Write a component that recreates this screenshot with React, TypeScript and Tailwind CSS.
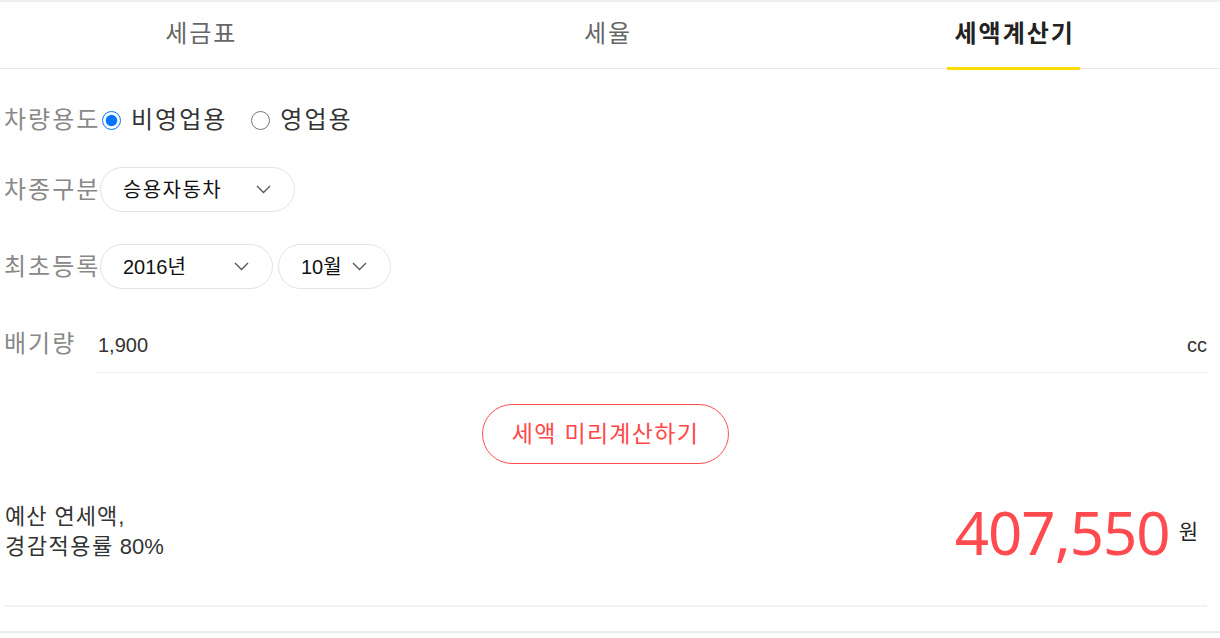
import React, { useState } from 'react';

const tabs = ['세금표', '세율', '세액계산기'];

const Chevron: React.FC = () => (
  <svg width="15" height="9" viewBox="0 0 15 9" fill="none">
    <path d="M1 1l6.5 6.5L14 1" stroke="#555" strokeWidth="1.3" />
  </svg>
);

const Pill: React.FC<{ value: string; className?: string }> = ({ value, className }) => (
  <div
    className={`flex items-center justify-between h-[45px] rounded-full border border-[#e3e3e3] bg-white pl-[22px] pr-[23px] text-[20px] text-[#111] shrink-0 whitespace-nowrap ${className ?? ''}`}
  >
    <span className="leading-none">{value}</span>
    <Chevron />
  </div>
);

const App: React.FC = () => {
  const [탭, set탭] = useState(2);
  const [용도, set용도] = useState('비영업용');

  return (
    <div
      className="w-[1220px] h-[638px] bg-white overflow-hidden"
      style={{ fontFamily: '"Liberation Sans", "Noto Sans CJK KR", sans-serif' }}
    >
      <div className="h-[2px] bg-[#eeeeee]" />

      {/* 탭 */}
      <div className="flex h-[67px] border-b border-[#e9e9e9]">
        {tabs.map((t, i) => (
          <button
            key={t}
            onClick={() => set탭(i)}
            className="flex-1 flex justify-center pr-[6px]"
          >
            <span
              className={`relative h-full flex items-center pl-[7px] pr-[5px] text-[24px] tracking-[2px] pb-[2px] whitespace-nowrap ${
                탭 === i ? 'font-bold text-[#222]' : 'text-[#666]'
              }`}
            >
              {t}
              {탭 === i && (
                <span className="absolute left-0 right-0 bottom-[-2px] h-[3px] bg-[#ffdc00]" />
              )}
            </span>
          </button>
        ))}
      </div>

      {/* 입력 폼 */}
      <div className="pl-[4px] pr-[13px]">
        <div className="flex items-center h-[40px] mt-[31px]">
          <span className="w-[96px] shrink-0 whitespace-nowrap text-[24px] tracking-[2px] text-[#888]">차량용도</span>
          {['비영업용', '영업용'].map((v, i) => (
            <label
              key={v}
              className={`flex items-center whitespace-nowrap text-[24px] tracking-[2px] text-[#333] ${i === 0 ? 'ml-[2px]' : 'ml-[24px]'}`}
            >
              <input
                type="radio"
                name="용도"
                checked={용도 === v}
                onChange={() => set용도(v)}
                className="m-0 w-[19px] h-[19px]"
              />
              <span className="ml-[10px]">{v}</span>
            </label>
          ))}
        </div>

        <div className="flex items-center mt-[27px]">
          <span className="w-[96px] shrink-0 whitespace-nowrap text-[24px] tracking-[2px] text-[#888]">차종구분</span>
          <Pill value="승용자동차" className="w-[195px] tracking-[1.4px]" />
        </div>

        <div className="flex items-center mt-[32px] gap-[5px]">
          <span className="w-[91px] shrink-0 whitespace-nowrap text-[24px] tracking-[2px] text-[#888]">최초등록</span>
          <Pill value="2016년" className="w-[173px]" />
          <Pill value="10월" className="w-[113px]" />
        </div>

        <div className="flex items-center mt-[28px] h-[56px]">
          <span className="w-[93px] shrink-0 whitespace-nowrap text-[24px] tracking-[2px] text-[#888] pb-[3px]">배기량</span>
          <div className="flex-1 flex items-center justify-between h-full border-b border-[#eeeeee] text-[20px] text-[#333] pl-[1px]">
            <span>1,900</span>
            <span>cc</span>
          </div>
        </div>

        <div className="flex justify-center mt-[31px]">
          <button className="w-[247px] h-[60px] rounded-full border border-[#ff5050] text-[23px] tracking-[1.3px] text-[#ff4848] bg-white whitespace-nowrap">
            세액 미리계산하기
          </button>
        </div>

        <div className="flex items-center justify-between mt-[36px] h-[64px] pl-[1px] pr-[9px]">
          <div className="text-[22px] leading-[30px] text-[#333] whitespace-nowrap">
            <div className="tracking-[1px]">예산 연세액,</div>
            <div>
              <span className="tracking-[1.5px]">경감적용률</span> 80%
            </div>
          </div>
          <div className="flex items-center">
            <span
              className="text-[60px] leading-none tracking-[-1px] text-[#ff4b4f]"
              style={{ fontFamily: '"Noto Sans", sans-serif' }}
            >
              407,550
            </span>
            <span className="ml-[9px] text-[21px] text-[#222]">원</span>
          </div>
        </div>

        <div className="mt-[41px] h-[2px] bg-[#f3f3f3]" />
      </div>

      <div className="mt-[24px] h-[2px] bg-[#ebebeb]" />
    </div>
  );
};

export default App;
